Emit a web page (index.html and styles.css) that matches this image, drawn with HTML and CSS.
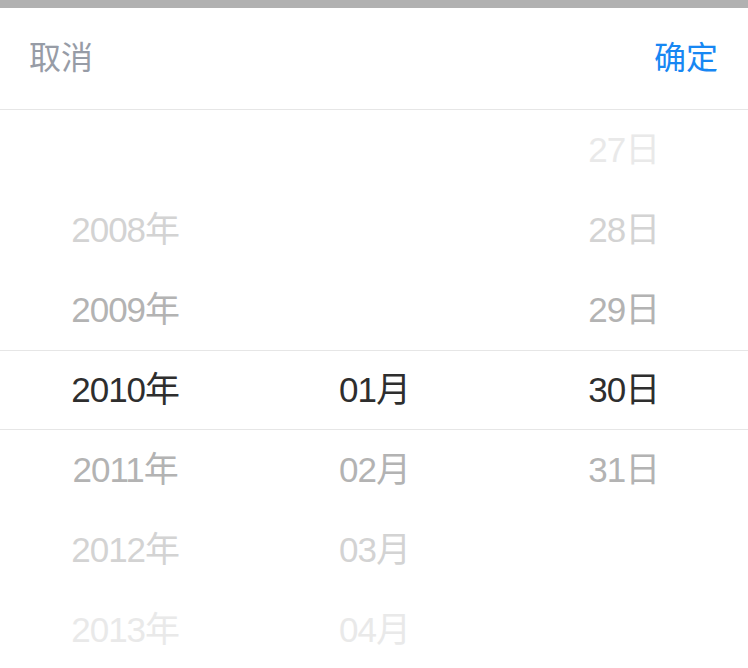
FILE: index.html
```html
<!DOCTYPE html>
<html lang="zh-CN">
<head>
<meta charset="utf-8">
<title>日期选择</title>
<link rel="stylesheet" href="styles.css">
</head>
<body>
<div class="topbar"></div>
<header class="toolbar">
  <span class="btn cancel">取消</span>
  <span class="btn confirm">确定</span>
</header>
<div class="picker">
  <div class="col">
    <div class="row"></div>
    <div class="row d2">2008年</div>
    <div class="row d1">2009年</div>
    <div class="row sel">2010年</div>
    <div class="row d1">2011年</div>
    <div class="row d2">2012年</div>
    <div class="row d3">2013年</div>
  </div>
  <div class="col">
    <div class="row"></div>
    <div class="row"></div>
    <div class="row"></div>
    <div class="row sel">01月</div>
    <div class="row d1">02月</div>
    <div class="row d2">03月</div>
    <div class="row d3">04月</div>
  </div>
  <div class="col">
    <div class="row d3">27日</div>
    <div class="row d2">28日</div>
    <div class="row d1">29日</div>
    <div class="row sel">30日</div>
    <div class="row d1">31日</div>
    <div class="row"></div>
    <div class="row"></div>
  </div>
</div>
</body>
</html>
```

FILE: styles.css
```css
html, body {
  margin: 0;
  padding: 0;
  background: #ffffff;
  width: 748px;
  height: 668px;
  overflow: hidden;
  font-family: "Noto Sans CJK SC", "Noto Sans", sans-serif;
}

.topbar {
  height: 8px;
  background: #b1b1b1;
}

.toolbar {
  box-sizing: border-box;
  height: 102px;
  border-bottom: 1px solid #e6e6e6;
  display: flex;
  align-items: center;
  justify-content: space-between;
  padding: 0 30px 8px 29px;
}

.btn {
  font-size: 32px;
  line-height: 1;
}

.cancel {
  color: #979ca6;
}

.confirm {
  color: #1787f3;
}

.picker {
  display: grid;
  grid-template-columns: 1fr 1fr 1fr;
}

.col {
  display: flex;
  flex-direction: column;
}

.row {
  height: 80px;
  box-sizing: border-box;
  display: flex;
  align-items: center;
  justify-content: center;
  padding: 0 0 1px 1px;
  font-family: "Liberation Sans", "Noto Sans CJK SC", sans-serif;
  font-size: 35px;
  line-height: 1;
  letter-spacing: -1px;
  color: #333333;
}

.row.sel {
  border-top: 1px solid #e6e6e6;
  border-bottom: 1px solid #e6e6e6;
  color: #2e2e2e;
}

.row.d1 {
  color: #b3b3b3;
}

.row.d2 {
  color: #d3d3d3;
}

.row.d3 {
  color: #e9e9e9;
}
```
